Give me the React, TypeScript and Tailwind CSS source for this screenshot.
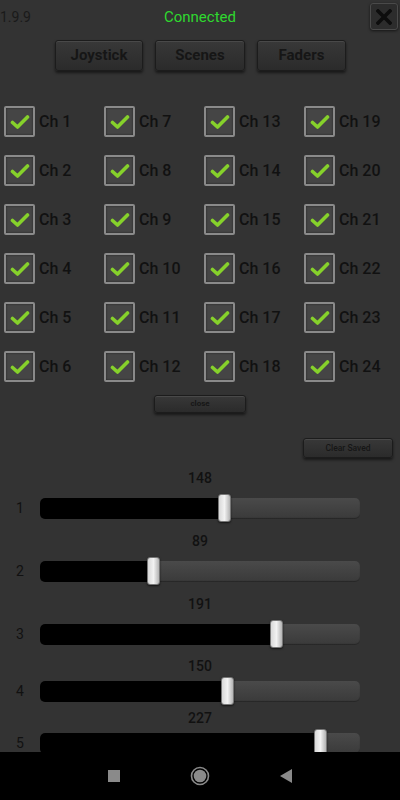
import React from "react";

const channels = Array.from({ length: 24 }, (_, i) => i + 1);

// row-major order for a 4 column grid where columns hold 1-6, 7-12 ...
const gridOrder = Array.from({ length: 24 }, (_, i) => {
  const row = Math.floor(i / 4);
  const col = i % 4;
  return channels[col * 6 + row];
});

const faders = [
  { id: 1, value: 148, labelTop: "mt-[12px]", trackTop: "mt-[12px]" },
  { id: 2, value: 89, labelTop: "mt-[14px]", trackTop: "mt-[12px]" },
  { id: 3, value: 191, labelTop: "mt-[14px]", trackTop: "mt-[12px]" },
  { id: 4, value: 150, labelTop: "mt-[13px]", trackTop: "mt-[7px]" },
  { id: 5, value: 227, labelTop: "mt-[8px]", trackTop: "mt-[7px]" },
];

const btn =
  "bg-linear-to-b from-[#383838] to-[#2b2b2b] border border-[#1c1c1c] rounded-[3px] shadow-[0_2px_3px_rgba(0,0,0,0.55),inset_0_1px_0_rgba(255,255,255,0.09)] text-[#161616] font-bold flex items-center justify-center";

const Check = () => (
  <div className="w-[31px] h-[31px] rounded-[2px] border-2 border-[#8a8a8a] bg-[#454545] shadow-[inset_0_0_2px_rgba(0,0,0,0.6)] flex items-center justify-center">
    <svg width="20" height="16" viewBox="0 0 20 16">
      <path
        d="M2.5 8.5 L7.5 13 L17.5 3"
        fill="none"
        stroke="#86d12b"
        strokeWidth="3.6"
        strokeLinecap="round"
        strokeLinejoin="round"
      />
    </svg>
  </div>
);

const Fader = ({ value }: { value: number }) => {
  const center = 6 + (value / 255) * 308;
  return (
    <div className="relative w-[320px] h-[21px] rounded-[5px] bg-linear-to-b from-[#4a4a4a] to-[#3a3a3a] shadow-[inset_0_-1px_1px_rgba(0,0,0,0.35)]">
      <div
        className="absolute left-0 top-0 h-full bg-black rounded-l-[5px]"
        style={{ width: center }}
      />
      <div
        className="absolute top-[-4px] w-[13px] h-[28px] rounded-[3px] border border-[#777] bg-linear-to-r from-[#d8d8d8] via-[#f2f2f2] to-[#b4b4b4] shadow-[0_1px_2px_rgba(0,0,0,0.6)]"
        style={{ left: center - 6.5 }}
      />
    </div>
  );
};

const App = () => {
  return (
    <div
      className="w-[400px] h-[800px] bg-[#333333] flex flex-col overflow-hidden"
      style={{ fontFamily: "Roboto, 'Liberation Sans', sans-serif" }}
    >
      <div className="flex-1 overflow-hidden flex flex-col">
        {/* header */}
        <div className="grid grid-cols-[1fr_auto_1fr] items-start h-[32px]">
          <div className="text-[14px] text-[#1a1a1a] pt-[8px] leading-[18px]">1.9.9</div>
          <div className="text-[15px] text-[#2fd82f] pt-[8px] leading-[18px]">Connected</div>
          <div className="flex justify-end pr-[2px] pt-[3px]">
            <div className="w-[28px] h-[27px] rounded-[3px] bg-[#2c2c2c] border border-[#4a4a4a] shadow-[0_1px_3px_rgba(0,0,0,0.6)] flex items-center justify-center">
              <svg width="16" height="16" viewBox="0 0 16 16">
                <path d="M2 2 L14 14 M14 2 L2 14" stroke="#0d0d0d" strokeWidth="3.6" strokeLinecap="square" />
              </svg>
            </div>
          </div>
        </div>

        {/* tabs */}
        <div className="flex justify-center gap-[12px] mt-[10px] pl-[1px]">
          <div className={`${btn} w-[88px] h-[31px] text-[15px]`}>Joystick</div>
          <div className={`${btn} w-[90px] h-[31px] text-[15px]`}>Scenes</div>
          <div className={`${btn} w-[89px] h-[31px] text-[15px]`}>Faders</div>
        </div>

        {/* channel grid */}
        <div className="grid grid-cols-[100px_100px_100px_96px] gap-y-[18px] pl-[4px] mt-[35px]">
          {gridOrder.map((ch) => (
            <div key={ch} className="flex items-center gap-[4px]">
              <Check />
              <span className="text-[16px] font-medium text-[#111]">Ch {ch}</span>
            </div>
          ))}
        </div>

        <div className="flex justify-center mt-[13px]">
          <div className={`${btn} w-[92px] h-[18px] text-[8px]`}>close</div>
        </div>

        <div className="flex justify-end pr-[7px] mt-[25px]">
          <div className={`${btn} w-[90px] h-[20px] text-[8.5px] font-medium`}>Clear Saved</div>
        </div>

        {/* faders */}
        {faders.map((f) => (
          <div key={f.id} className="flex flex-col">
            <div className={`${f.labelTop} h-[16px] leading-[16px] text-center text-[14px] font-medium text-[#111]`}>
              {f.value}
            </div>
            <div className={`${f.trackTop} flex items-center`}>
              <div className="w-[40px] text-center text-[14px] text-[#111]">{f.id}</div>
              <Fader value={f.value} />
            </div>
          </div>
        ))}
      </div>

      {/* system nav */}
      <div className="h-[48px] shrink-0 bg-black flex items-center justify-center gap-[70px]">
        <div className="w-[12px] h-[12px] bg-[#8a8a8a]" />
        <svg width="20" height="20" viewBox="0 0 20 20">
          <circle cx="10" cy="10" r="8.5" fill="none" stroke="#8a8a8a" strokeWidth="1.6" />
          <circle cx="10" cy="10" r="6.3" fill="#8a8a8a" />
        </svg>
        <svg width="12" height="14" viewBox="0 0 12 14">
          <path d="M12 0 L12 14 L0 7 Z" fill="#8a8a8a" />
        </svg>
      </div>
    </div>
  );
};

export default App;
